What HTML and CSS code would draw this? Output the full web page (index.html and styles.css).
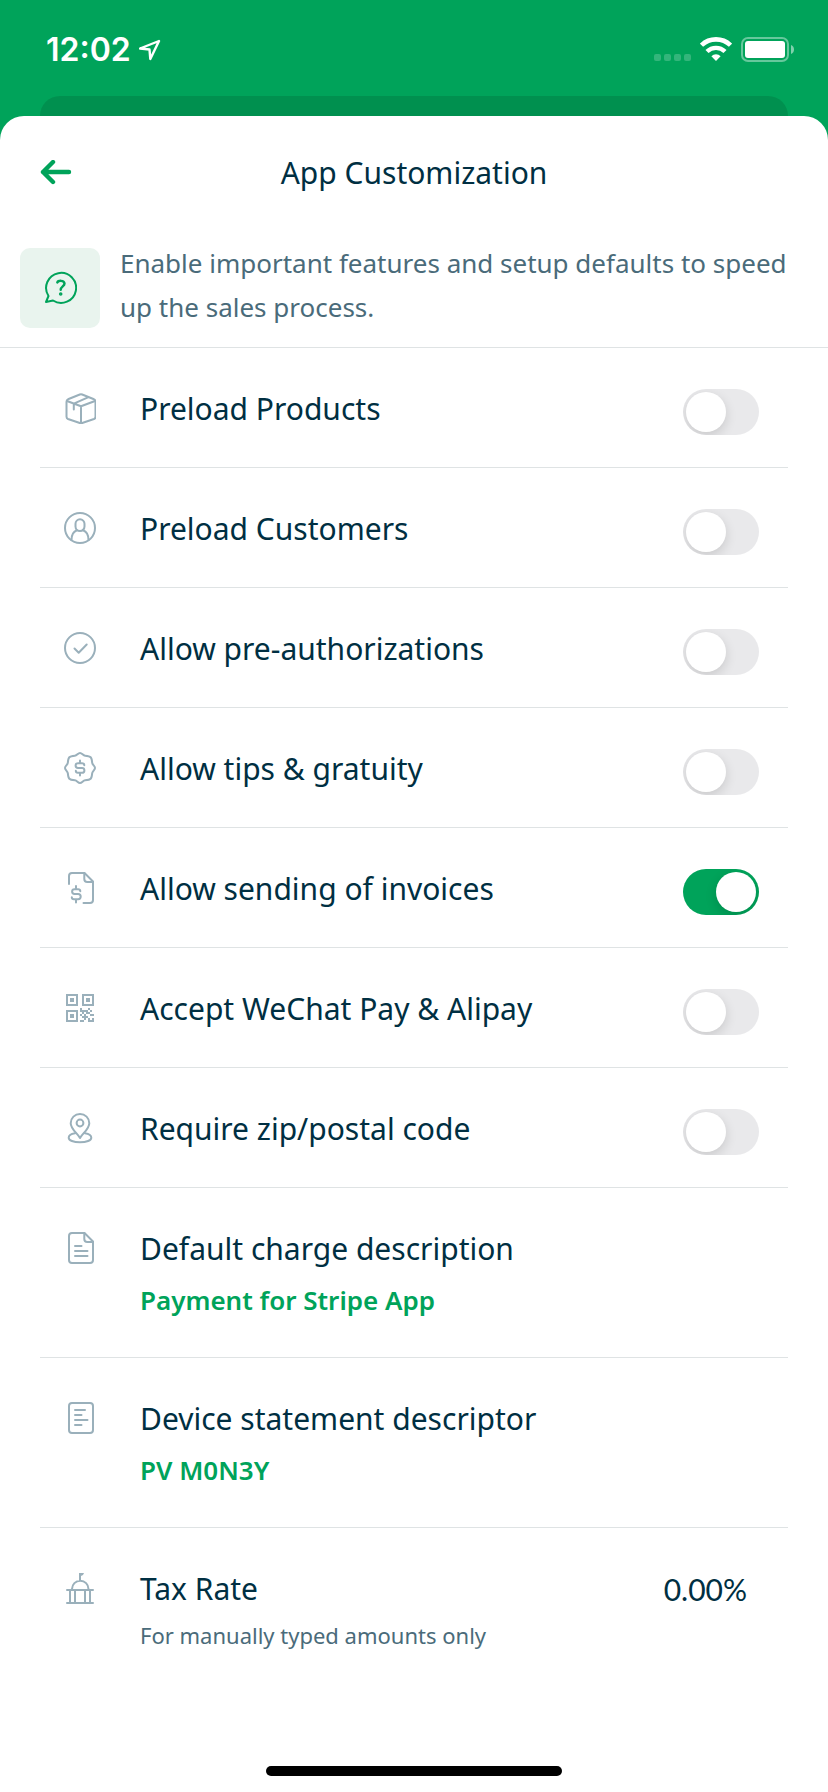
FILE: index.html
```html
<!DOCTYPE html>
<html lang="en">
<head>
  <meta charset="utf-8">
  <meta name="viewport" content="width=device-width, initial-scale=1">
  <title>App Customization</title>
  <link rel="stylesheet" href="styles.css">
</head>
<body>
  <div class="status-bar">
    <div class="status-left">
      <span class="time">12:02</span>
      <svg width="22" height="22" viewBox="0 0 22 22" fill="none" stroke="#fff" stroke-width="2.4" stroke-linejoin="round">
        <path d="M20 2L1 9.500l9.500 1 .8 9.500z"/>
      </svg>
    </div>
    <div class="status-right">
      <div class="signal"><i></i><i></i><i></i><i></i></div>
      <svg width="32" height="25" viewBox="0 0 32 25" fill="none" stroke="#fff">
        <path d="M1.500 8.200a21 21 0 0 1 29 0" stroke-width="4.600"/>
        <path d="M7 14.500a13 13 0 0 1 18 0" stroke-width="4.400"/>
        <path d="M16 24l-4.600-4.800a6.500 6.500 0 0 1 9.200 0z" fill="#fff" stroke="none"/>
      </svg>
      <svg width="54" height="25" viewBox="0 0 54 25">
        <rect x="1" y="1" width="46" height="23" rx="6" fill="none" stroke="#fff" stroke-opacity=".4" stroke-width="2"/>
        <rect x="4" y="4" width="40" height="17" rx="3" fill="#fff"/>
        <path d="M50 8c4 1.500 4 7.500 0 9z" fill="#fff" fill-opacity=".5"/>
      </svg>
    </div>
  </div>
  <div class="sheet-behind"></div>

  <main class="sheet">
    <header class="header">
      <button class="back" type="button" aria-label="Back">
        <svg width="32" height="26" viewBox="0 0 32 26" fill="none" stroke="#00a35a" stroke-width="4.400" stroke-linecap="round" stroke-linejoin="round">
          <path d="M13 2L3 12l10 10M3 12h26"/>
        </svg>
      </button>
      <h1>App Customization</h1>
    </header>

    <div class="intro">
      <div class="intro-icon">
        <svg width="34" height="34" viewBox="-1 0 34 34" fill="none" stroke="#00a35a" stroke-width="2" stroke-linecap="round" stroke-linejoin="round">
          <path d="M4.500 25A15 15 0 1 1 9 29.500l-7 1.500z"/>
          <path d="M13.300 11.500c.8-2 6.800-2.800 7.200 1 .2 2.600-3.800 3.200-3.800 6.200" stroke-width="2.400"/>
          <circle cx="16.700" cy="23" r=".8"/>
        </svg>
      </div>
      <p>Enable important features and setup defaults to speed up the sales process.</p>
    </div>

    <ul class="settings">
      <li class="row">
        <svg class="icon" viewBox="0 0 32 32">
          <path d="M15.800 2.500L4 7.300Q2.500 8 2.500 9.700v15q0 1.700 1.500 2.300l11.800 4q1.200.5 2.400 0l11.800-4q1.500-.6 1.500-2.300v-15q0-1.700-1.500-2.400L18.200 2.500q-1.200-.5-2.400 0z"/>
          <path d="M3 9l14 5.300L31 9M17 14.300V31M9.800 17.500v-5.800L24 5.300"/>
        </svg>
        <label class="label" for="products">Preload Products</label>
        <input class="toggle" type="checkbox" id="products">
      </li>
      <li class="row">
        <svg class="icon" viewBox="0 0 32 32">
          <circle cx="16" cy="16" r="15"/>
          <path d="M11.500 11.800a4.500 4.500 0 0 1 9 0v2.700a4.500 4.500 0 0 1-9 0z"/>
          <path d="M7.500 28c0-5 1.200-8.200 5.500-9.800M24.500 28c0-5-1.200-8.200-5.500-9.800"/>
        </svg>
        <label class="label" for="customers">Preload Customers</label>
        <input class="toggle" type="checkbox" id="customers">
      </li>
      <li class="row">
        <svg class="icon" viewBox="0 0 32 32">
          <circle cx="16" cy="16" r="15"/>
          <path d="M10.500 16.500l4.200 4.200 8-8.200"/>
        </svg>
        <label class="label" for="preauth">Allow pre-authorizations</label>
        <input class="toggle" type="checkbox" id="preauth">
      </li>
      <li class="row">
        <svg class="icon" viewBox="0 0 32 32">
          <path d="M16 1c2 0 3 2.600 5.100 2.800 2.300.2 4.500.4 5.600 1.500s1.300 3.300 1.500 5.600C28.400 13 31 14 31 16s-2.600 3-2.800 5.100c-.2 2.300-.4 4.500-1.500 5.600s-3.300 1.300-5.600 1.500C19 28.400 18 31 16 31s-3-2.600-5.100-2.800c-2.300-.2-4.500-.4-5.600-1.500s-1.300-3.300-1.500-5.600C3.600 19 1 18 1 16s2.600-3 2.800-5.100c.2-2.300.4-4.500 1.500-5.600s3.300-1.300 5.600-1.500C13 3.600 14 1 16 1z"/>
          <path d="M20.300 13.200c0-1.200-1-2-2.200-2H14a2.400 2.400 0 0 0 0 4.800h4a2.400 2.400 0 0 1 0 4.800h-4.200c-1.200 0-2-.8-2-2M16 8.500v2.700M16 20.800v2.700"/>
        </svg>
        <label class="label" for="tips">Allow tips &amp; gratuity</label>
        <input class="toggle" type="checkbox" id="tips">
      </li>
      <li class="row">
        <svg class="icon" viewBox="0 0 32 32">
          <path d="M5 12V4a3 3 0 0 1 3-3h12.500l8.500 8.500V28a3 3 0 0 1-3 3h-6.500"/>
          <path d="M20.300 1v6a3 3 0 0 0 3 3H29"/>
          <path d="M16.300 19.200c0-1.200-1-2-2.200-2H10.500a2.400 2.400 0 0 0 0 4.800h3.600a2.600 2.600 0 0 1 0 5.200H10c-1.400 0-2.200-.8-2.200-2M12 14v3.200M12 27.200v3.300"/>
        </svg>
        <label class="label" for="invoices">Allow sending of invoices</label>
        <input class="toggle" type="checkbox" id="invoices" checked>
      </li>
      <li class="row">
        <svg class="icon" viewBox="0 0 32 32">
          <path class="sharp" d="M3 3h10v10H3zM19 3h10v10H19zM3 19h10v10H3z"/>
          <path class="solid" d="M6 6h4v4H6zM22 6h4v4h-4zM6 22h4v4H6z"/>
          <path class="sharp" d="M16 17h2M24 17h2M16 19h8M26 19h2M18 21h2M22 21h4M16 23h2M20 23h2M26 23h4M18 25h6M20 27h2M24 27h2M28 27h2M16 29h4M24 29h6"/>
        </svg>
        <label class="label" for="wechat">Accept WeChat Pay &amp; Alipay</label>
        <input class="toggle" type="checkbox" id="wechat">
      </li>
      <li class="row">
        <svg class="icon" viewBox="0 0 32 32">
          <path d="M16 26C13.500 21.500 6.700 17 6.700 11.200a9.300 9.300 0 0 1 18.600 0C25.300 17 18.500 21.500 16 26z"/>
          <circle cx="16" cy="11" r="3.400"/>
          <path d="M11 21.300C7.200 21.900 4.700 23.600 4.700 25.700c0 2.700 4.800 4.600 11.300 4.600s11.300-1.900 11.300-4.600c0-2.100-2.500-3.800-6.300-4.400"/>
        </svg>
        <label class="label" for="zip">Require zip/postal code</label>
        <input class="toggle" type="checkbox" id="zip">
      </li>
      <li class="row">
        <svg class="icon" viewBox="0 0 32 32">
          <path d="M20.500 1H8a3 3 0 0 0-3 3v24a3 3 0 0 0 3 3h18a3 3 0 0 0 3-3V9.500z"/>
          <path d="M20.300 1v6a3 3 0 0 0 3 3H29M11 14h6.500M11 19h12.500M11 24h12.500"/>
        </svg>
        <div class="text">
          <div class="label">Default charge description</div>
          <div class="value">Payment for Stripe App</div>
        </div>
      </li>
      <li class="row">
        <svg class="icon" viewBox="0 0 32 32">
          <rect x="5" y="1" width="24" height="30" rx="3"/>
          <path d="M11 8h10M11 13h6.500M11 18h12.500M11 23h6.500"/>
        </svg>
        <div class="text">
          <div class="label">Device statement descriptor</div>
          <div class="value">PV M0N3Y</div>
        </div>
      </li>
      <li class="row">
        <svg class="icon" viewBox="0 0 32 32">
          <path d="M3 18h26M3 31h26M6 18v13M11 18v13M21 18v13M26 18v13M8 17a8.200 8.200 0 0 1 16.500 0M16 8.500V2"/>
          <path class="solid" d="M15 1h5l-1 2-2 1h-2z"/>
        </svg>
        <div class="text">
          <div class="label">Tax Rate</div>
          <div class="hint">For manually typed amounts only</div>
        </div>
        <span class="rate">0.00%</span>
      </li>
    </ul>

    <div class="home-indicator"></div>
  </main>
</body>
</html>
```
FILE: styles.css
```css
* {
  box-sizing: border-box;
  margin: 0;
  padding: 0;
}

body {
  display: flex;
  flex-direction: column;
  min-height: 100vh;
  background-color: #00a35a;
  color: #002f42;
  font-family: "Noto Sans", sans-serif;
  font-size: 30px;
  line-height: 42px;
}

.status-bar {
  display: flex;
  justify-content: space-between;
  align-items: center;
  height: 96px;
  padding: 3px 33px 0 46px;
}

.status-left {
  display: flex;
  align-items: center;
  gap: 8px;
}

.time {
  color: #fff;
  font-family: Inter, sans-serif;
  font-size: 32px;
  font-weight: 600;
}

.status-right {
  display: flex;
  align-items: flex-end;
  gap: 9px;
}

.signal {
  display: flex;
  gap: 3px;
  padding-bottom: 1px;
}

.signal i {
  width: 7px;
  height: 7px;
  border-radius: 2px;
  background-color: rgba(255, 255, 255, 0.2);
}

.sheet-behind {
  height: 20px;
  margin: 0 40px;
  border-radius: 20px 20px 0 0;
  background-color: #00904f;
}

.sheet {
  flex: 1;
  display: flex;
  flex-direction: column;
  border-radius: 24px 24px 0 0;
  background-color: #fff;
}

.header {
  display: grid;
  grid-template-columns: 32px 1fr 32px;
  align-items: center;
  padding: 36px 40px 34px;
}

.header h1 {
  font-size: 30px;
  font-weight: 400;
  text-align: center;
}

.back {
  display: flex;
  border: none;
  background: none;
  cursor: pointer;
}

.intro {
  display: flex;
  align-items: flex-start;
  gap: 20px;
  padding: 13px 40px 18px 20px;
  border-bottom: 1px solid #dfe3e4;
  color: #4a6b7a;
  font-size: 26px;
  line-height: 44px;
}

.intro-icon {
  display: flex;
  flex-shrink: 0;
  align-items: center;
  justify-content: center;
  width: 80px;
  height: 80px;
  margin-top: 7px;
  border-radius: 10px;
  background-color: #e9f4ee;
}

.settings {
  margin: 0 40px;
  list-style: none;
}

.row {
  display: flex;
  align-items: flex-start;
  min-height: 120px;
  padding: 40px 29px 36px 24px;
  border-bottom: 1px solid #dfe3e4;
}

.row:last-child {
  border-bottom: none;
}

.icon {
  flex-shrink: 0;
  width: 32px;
  height: 32px;
  margin: 4px 44px 0 0;
  fill: none;
  stroke: #9ab0bb;
  stroke-width: 2;
  stroke-linecap: round;
  stroke-linejoin: round;
}

.icon .sharp {
  stroke-linecap: butt;
  stroke-linejoin: miter;
}

.icon .solid {
  fill: #9ab0bb;
  stroke: none;
}

.label,
.text {
  flex: 1;
}

.value {
  margin-top: 9px;
  color: #00a35a;
  font-size: 26px;
  font-weight: 600;
}

.hint {
  margin-top: 9px;
  color: #4a6b7a;
  font-size: 22px;
  line-height: 32px;
}

.rate {
  padding-right: 12px;
  font-family: Lato, sans-serif;
}

.toggle {
  appearance: none;
  flex-shrink: 0;
  width: 76px;
  height: 46px;
  margin: 1px 0 -10px;
  padding: 3px;
  border-radius: 23px;
  background-color: #e9e9eb;
  overflow: hidden;
  cursor: pointer;
}

.toggle::before {
  content: "";
  display: block;
  width: 40px;
  height: 40px;
  border-radius: 50%;
  background-color: #fff;
  box-shadow: 0 4px 12px rgba(0, 0, 0, 0.14);
}

.toggle:checked {
  background-color: #00a35a;
}

.toggle:checked::before {
  margin-left: 30px;
}

.home-indicator {
  width: 296px;
  height: 10px;
  margin: auto auto 16px;
  border-radius: 5px;
  background-color: #000;
}
```
